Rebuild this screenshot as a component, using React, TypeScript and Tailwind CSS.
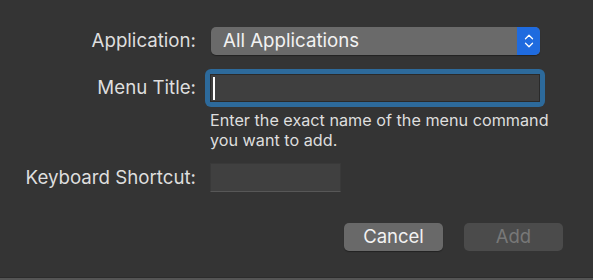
import { ChevronUp, ChevronDown } from "lucide-react";

const font = { fontFamily: "Inter, 'Noto Sans', sans-serif" };

function Label({ children }: { children: React.ReactNode }) {
  return <div className="w-[196px] shrink-0 text-right text-[18.7px] leading-[24px] text-[#dedede]">{children}</div>;
}

export default function App() {
  return (
    <div className="w-[593px] h-[280px] bg-[#343434] flex flex-col relative overflow-hidden" style={font}>
      <div className="flex flex-col flex-1 pt-[27px]">
        {/* Application popup */}
        <div className="flex items-center">
          <Label>Application:</Label>
          <div className="ml-[15px] w-[329px] h-[28px] flex rounded-[5px] bg-[#6a6a6a] shadow-[0_1px_1px_rgba(0,0,0,0.35)] overflow-hidden">
            <div className="flex-1 flex items-center pl-[12px] text-[18.7px] text-[#f2f2f2]">All Applications</div>
            <div className="w-[23px] bg-[#1f6bdf] flex flex-col items-center justify-center text-white">
              <ChevronUp size={14} strokeWidth={2.2} className="-mb-[3px]" />
              <ChevronDown size={14} strokeWidth={2.2} className="-mt-[3px]" />
            </div>
          </div>
        </div>

        {/* Menu title */}
        <div className="flex items-center mt-[14px]">
          <Label>Menu Title:</Label>
          <div className="ml-[9px] w-[340px] h-[38px] rounded-[6px] bg-[#2d6a9b] p-[5px]">
            <div className="w-full h-full bg-[#3f3f3f] border border-[#2a2a2a] flex items-center pl-[2px]">
              <div className="w-[2px] h-[23px] bg-white" />
            </div>
          </div>
        </div>
        <div className="ml-[210px] mt-[3px] text-[16.2px] leading-[20px] text-[#dedede]">
          Enter the exact name of the menu command
          <br />
          you want to add.
        </div>

        {/* Shortcut */}
        <div className="flex items-center mt-[13px]">
          <Label>Keyboard Shortcut:</Label>
          <div className="ml-[14px] w-[131px] h-[29px] bg-[#404040] border border-[#393939] border-b-[#575757]" />
        </div>

        {/* Buttons */}
        <div className="flex justify-end gap-[21px] pr-[30px] mt-[31px]">
          <div className="w-[99px] h-[28px] rounded-[5px] bg-[#696969] shadow-[0_1px_1px_rgba(0,0,0,0.35)] flex items-center justify-center text-[18.5px] text-[#f2f2f2]">
            Cancel
          </div>
          <div className="w-[99px] h-[28px] rounded-[5px] bg-[#4b4b4b] flex items-center justify-center text-[18.5px] text-[#787878]">
            Add
          </div>
        </div>
      </div>
      <div className="h-[3px] bg-[#555555] border-t border-[#2c2c2c]" />
    </div>
  );
}
